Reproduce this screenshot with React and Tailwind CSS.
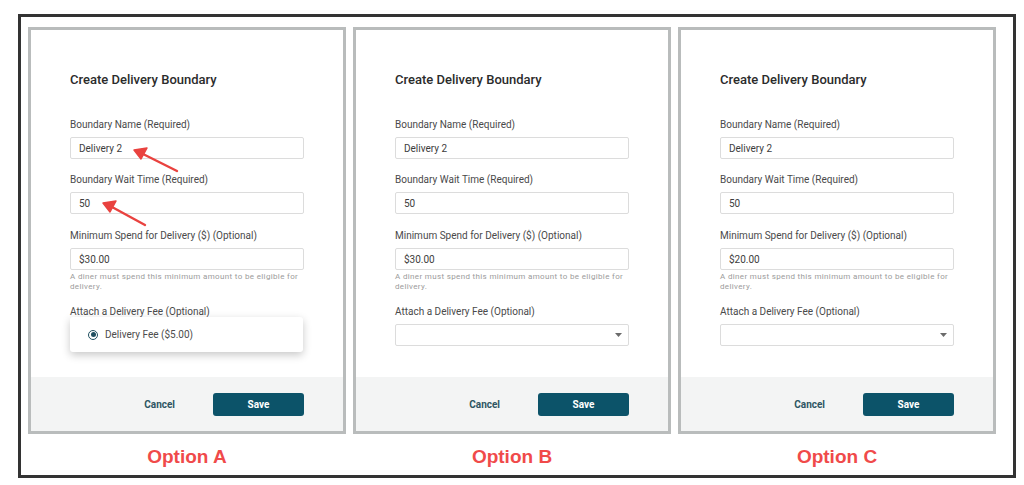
import React from 'react'

const font = { fontFamily: 'Roboto, "Liberation Sans", Arial, sans-serif' }

function Field({ label, value, className = '' }) {
  return (
    <div className={className}>
      <div className="text-[10px] leading-[12px] text-[#4a4a4a]">{label}</div>
      <div className="mt-[6px] h-[22px] border border-[#dcdcdc] rounded-[2px] flex items-center px-[8px] text-[10px] text-[#3d3d3d]">
        {value}
      </div>
    </div>
  )
}

function Caret() {
  return (
    <svg width="7" height="4" viewBox="0 0 7 4" className="mr-[6px]">
      <path d="M0 0 L7 0 L3.5 4 Z" fill="#6b6b6b" />
    </svg>
  )
}

function Arrows() {
  return (
    <svg className="absolute left-0 top-0 pointer-events-none" width="318" height="407" viewBox="0 0 318 407">
      <g stroke="#e9423f" strokeWidth="2.4" strokeLinecap="round" fill="#e9423f">
        <line x1="146" y1="141" x2="112" y2="124" />
        <path d="M103 120 L116 118 L110 129 Z" strokeLinejoin="round" strokeWidth="1.5" />
        <line x1="114" y1="195" x2="81" y2="177" />
        <path d="M72 173 L85 171 L79 182 Z" strokeLinejoin="round" strokeWidth="1.5" />
      </g>
    </svg>
  )
}

function Panel({ variant, spend }) {
  return (
    <div className="relative w-[318px] h-[407px] border-[3px] border-[#b9bcbc] bg-white flex flex-col">
      <div className="px-[39px] pt-[42px]">
        <h2 className="text-[13px] leading-[16px] font-medium text-[#2b2b2b]">Create Delivery Boundary</h2>
        <Field className="mt-[31px]" label="Boundary Name (Required)" value="Delivery 2" />
        <Field className="mt-[15px]" label="Boundary Wait Time (Required)" value="50" />
        <Field className="mt-[16px]" label="Minimum Spend for Delivery ($) (Optional)" value={spend} />
        <p className="mt-[2px] text-[8px] leading-[10px] tracking-[0.35px] text-[#9b9b9b]">
          A diner must spend this minimum amount to be eligible for delivery.
        </p>
        <div className="mt-[14px] text-[10px] leading-[12px] text-[#4a4a4a]">Attach a Delivery Fee (Optional)</div>
        {variant === 'A' ? (
          <div className="relative mt-[6px] h-[22px]">
            <div className="absolute left-0 right-[1px] top-[-7px] h-[35px] bg-white rounded-[3px] shadow-[0_3px_8px_rgba(0,0,0,0.22)] flex items-center pl-[18px]">
              <span className="w-[10px] h-[10px] rounded-full border-[1.5px] border-[#1f4f60] flex items-center justify-center">
                <span className="w-[5px] h-[5px] rounded-full bg-[#1f4f60]" />
              </span>
              <span className="ml-[7px] text-[10px] text-[#4d4d4d]">Delivery Fee ($5.00)</span>
            </div>
          </div>
        ) : (
          <div className="mt-[6px] h-[22px] border border-[#dcdcdc] rounded-[2px] flex items-center justify-end">
            <Caret />
          </div>
        )}
      </div>
      <div className="mt-auto h-[54px] bg-[#f3f4f4] flex items-center justify-end px-[39px]">
        <button className="mr-[38px] text-[10px] font-bold text-[#2e5462]">Cancel</button>
        <button className="w-[91px] h-[23px] rounded-[3px] bg-[#0c5369] text-white text-[10px] font-bold">Save</button>
      </div>
      {variant === 'A' && <Arrows />}
    </div>
  )
}

export default function App() {
  const panels = [
    { variant: 'A', spend: '$30.00' },
    { variant: 'B', spend: '$30.00' },
    { variant: 'C', spend: '$20.00' },
  ]
  return (
    <div className="w-[1024px] h-[485px] bg-white pt-[14px] pl-[18px]" style={font}>
      <div className="w-[998px] h-[464px] border-[3px] border-[#333333] pl-[7px] pt-[10px]">
        <div className="flex gap-[7px]">
          {panels.map((p) => (
            <div key={p.variant} className="flex flex-col items-center">
              <Panel variant={p.variant} spend={p.spend} />
              <div className="mt-[12px] text-[19px] leading-[22px] font-bold text-[#f04a4a]" style={{ fontFamily: '"Liberation Sans", Arial, sans-serif' }}>
                Option {p.variant}
              </div>
            </div>
          ))}
        </div>
      </div>
    </div>
  )
}
